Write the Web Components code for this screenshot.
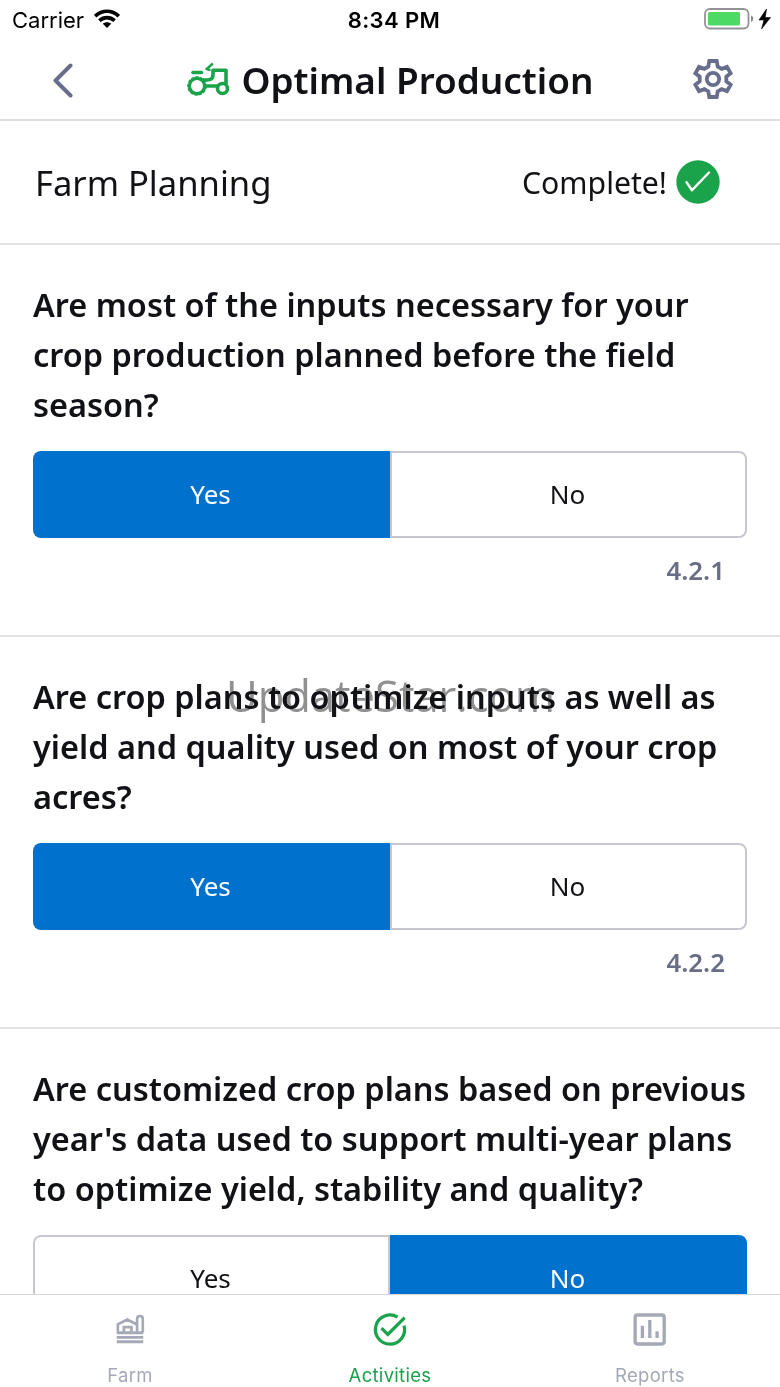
<!DOCTYPE html>
<html lang="en">
<head>
<meta charset="utf-8">
<title>Optimal Production</title>
<style>
  body {
    margin: 0;
    background: #fff;
    color: #111216;
    font-family: "Noto Sans", "Open Sans", sans-serif;
  }
</style>
</head>
<body>
<farm-app></farm-app>

<script>
const define = (tagName, markup, setup) => {
  const template = document.createElement('template');
  template.innerHTML = markup;

  window.customElements.define(tagName, class extends HTMLElement {
    constructor() {
      super();
      this.attachShadow({ mode: 'open' });
      this.shadowRoot.appendChild(template.content.cloneNode(true));
    }

    connectedCallback() {
      if (setup) setup(this, this.shadowRoot);
    }
  });
};

define('status-bar', `
  <style>
    :host {
      display: grid;
      grid-template-columns: 1fr auto 1fr;
      align-items: center;
      height: 40px;
      box-sizing: border-box;
      padding: 0 8px 0 12px;
      color: #000;
      font: 22px/40px Inter, sans-serif;
    }
    .left, .right { display: flex; align-items: center; }
    .left { gap: 10px; }
    .right { justify-content: flex-end; }
    .time { font-weight: 600; letter-spacing: 0.4px; margin-left: 4px; }
    svg { display: block; margin-bottom: 2px; }
  </style>
  <div class="left">
    <span>Carrier</span>
    <svg width="26" height="20" viewBox="0 0 26 20" fill="none" stroke="#000" stroke-width="3.6">
      <path d="M1.200 7.200C8 .5 18 .5 24.800 7.200"/>
      <path d="M5.400 11.600c4.500-4 10.700-4 15.200 0"/>
      <path d="M13 19l-4.200-4.200c2.500-2 5.900-2 8.400 0z" fill="#000" stroke="none"/>
    </svg>
  </div>
  <span class="time">8:34 PM</span>
  <div class="right">
    <svg width="68" height="24" viewBox="0 0 68 24">
      <rect x="1" y="2" width="43.500" height="19.500" rx="5" fill="none" stroke="#939397" stroke-width="1.800"/>
      <rect x="4" y="5" width="32" height="13.500" rx="1.500" fill="#4cd964"/>
      <path d="M47 8.500c3 1 3 5.500 0 6.500z" fill="#8a8a8f"/>
      <path d="M62.500 2L55 13h5l-2.500 9L66.500 10.500h-5.300z" fill="#000" stroke="#000" stroke-width=".6"/>
    </svg>
  </div>
`);

define('nav-header', `
  <style>
    :host {
      display: grid;
      grid-template-columns: 120px 1fr 120px;
      align-items: center;
      height: 81px;
      box-sizing: border-box;
      border-bottom: 2px solid #e1e1e3;
    }
    svg { display: block; }
    .back { margin-left: 51px; }
    .gear { margin-left: 32px; margin-bottom: 2px; }
    .title {
      display: flex;
      justify-content: center;
      align-items: center;
      gap: 11px;
      font-size: 36.900px;
      font-weight: 600;
      line-height: 50px;
      white-space: nowrap;
    }
  </style>
  <svg class="back" width="24" height="36" viewBox="0 0 24 36" fill="none" stroke="#696d8c" stroke-width="4" stroke-linecap="round" stroke-linejoin="round">
    <path d="M19.500 3.500L4.500 18.500L19.500 33.500"/>
  </svg>
  <div class="title">
    <svg width="44" height="36" viewBox="0 0 44 36" fill="none" stroke="#1aa34a" stroke-width="3.600">
      <circle cx="11" cy="24" r="7.600" stroke-width="3.200"/>
      <circle cx="11" cy="24" r="9" stroke-width="1.600" stroke-dasharray="3.300 1.200"/>
      <circle cx="36.500" cy="26.500" r="5"/>
      <path d="M7 10.500h8.500" stroke-width="3.600" stroke-linecap="round"/>
      <path d="M20 24h12M17 18h4q6 0 6-5V8.300H40V22" stroke-linejoin="round"/>
      <path d="M19.500 6.500q3 1.500 5 1.500M20.800 7l6-5.500" stroke-width="2.400"/>
    </svg>
    <slot></slot>
  </div>
  <svg class="gear" width="42" height="42" viewBox="0 0 42 42" fill="none" stroke="#696d8c" stroke-width="3.800" stroke-linejoin="miter">
    <path d="M17.300 3h7.400l1 5.600 4 2.300 5.300-2 3.600 6.300-4.300 3.500v4.600l4.300 3.500-3.600 6.300-5.300-2-4 2.300-1 5.600h-7.400l-1-5.600-4-2.300-5.300 2-3.600-6.300 4.300-3.500v-4.600l-4.300-3.500L7 8.900l5.300 2 4-2.300z"/>
    <circle cx="21" cy="21" r="6.200"/>
  </svg>
`);

define('section-header', `
  <style>
    :host {
      display: flex;
      align-items: center;
      justify-content: space-between;
      height: 124px;
      box-sizing: border-box;
      padding: 0 60px 0 35px;
      border-bottom: 2px solid #e1e1e3;
      font-size: 34.600px;
    }
    .state { display: flex; align-items: center; gap: 9px; font-size: 30.200px; }
    svg { display: block; margin-bottom: 1px; }
  </style>
  <slot></slot>
  <div class="state">
    <slot name="state"></slot>
    <svg width="44" height="44" viewBox="0 0 44 44">
      <circle cx="22" cy="22" r="21.700" fill="#1aa34a"/>
      <path d="M10.500 22.200L16 30.200L33 12.500" fill="none" stroke="#fff" stroke-width="2.400" stroke-linecap="round" stroke-linejoin="round"/>
    </svg>
  </div>
`);

define('yes-no', `
  <style>
    :host {
      display: grid;
      grid-template-columns: 1fr 1fr;
      height: 87px;
      font-size: 26px;
    }
    .option {
      display: flex;
      align-items: center;
      justify-content: center;
      box-sizing: border-box;
      padding: 0 2px 2px 0;
      border: 2px solid #c6c8ce;
      background: #fff;
    }
    .yes { border-radius: 8px 0 0 8px; border-right: 0; padding-right: 4px; }
    .no { border-radius: 0 8px 8px 0; }
    :host([value="no"]) .yes { border-right: 2px solid #c6c8ce; padding-right: 2px; }
    :host([value="yes"]) .yes,
    :host([value="no"]) .no {
      background: #0072ce;
      border-color: #0072ce;
      color: #fff;
    }
  </style>
  <div class="option yes">Yes</div>
  <div class="option no">No</div>
`);

define('survey-question', `
  <style>
    :host {
      display: flex;
      flex-direction: column;
      height: 392px;
      box-sizing: border-box;
      padding: 35px 33px 0;
      border-bottom: 2px solid #e1e1e3;
    }
    .text {
      font-size: 32.480px;
      font-weight: 600;
      line-height: 50px;
      white-space: nowrap;
      margin-bottom: 21px;
    }
    .code {
      align-self: flex-end;
      margin: 14px 22px 0 0;
      color: #696d85;
      font-size: 25.800px;
      font-weight: 600;
      line-height: 36px;
    }
  </style>
  <div class="text"><slot></slot></div>
  <yes-no></yes-no>
  <div class="code"></div>
`, (host, root) => {
  root.querySelector('yes-no').setAttribute('value', host.getAttribute('answer'));
  root.querySelector('.code').textContent = host.getAttribute('code') || '';
});

define('tab-item', `
  <style>
    :host {
      flex: 1;
      display: flex;
      flex-direction: column;
      align-items: center;
      padding-top: 16px;
      color: #a5a9b6;
      font: 18.500px/24px Inter, sans-serif;
      letter-spacing: 0.3px;
    }
    :host([active]) { color: #1aa34a; }
    .label { margin-top: 16px; }
  </style>
  <slot name="icon"></slot>
  <div class="label"><slot></slot></div>
`);

define('tab-bar', `
  <style>
    :host {
      display: flex;
      height: 93px;
      box-sizing: border-box;
      border-top: 1px solid #d6d7da;
      background: #fff;
    }
    svg { display: block; }
  </style>
  <tab-item>
    <svg slot="icon" width="38" height="38" viewBox="0 0 38 38" fill="none" stroke="currentColor" stroke-width="2.800">
      <path d="M5 23h28M5 27.800h28M5 32.500h28" stroke-width="3"/>
      <path d="M6.200 22v-8l10-5 9.500 5M12.500 22v-5h8v5M26.500 22V8.500q0-3.200 3-3.200t3 3.200v14"/>
    </svg>
    Farm
  </tab-item>
  <tab-item active>
    <svg slot="icon" width="38" height="38" viewBox="0 0 38 38" fill="none" stroke="currentColor" stroke-width="3.400">
      <path d="M27 6.500A15.400 15.400 0 1 0 33.800 15.500"/>
      <path d="M10 18L16.700 24.800L34.500 7"/>
    </svg>
    Activities
  </tab-item>
  <tab-item>
    <svg slot="icon" width="38" height="38" viewBox="0 0 38 38" fill="none" stroke="currentColor" stroke-width="3.500">
      <rect x="3.300" y="4.200" width="30.700" height="30.600" rx="2.500"/>
      <path d="M11 15.500V28.500M18.800 9.500V28.500M26.500 21.500V28.500"/>
    </svg>
    Reports
  </tab-item>
`);

define('farm-app', `
  <style>
    :host {
      position: relative;
      display: flex;
      flex-direction: column;
      width: 780px;
      height: 1387px;
      overflow: hidden;
    }
    .questions { flex: 1; min-height: 0; overflow: hidden; }
    /* stamp laid over the scrolling content */
    .stamp {
      position: absolute;
      left: 226px;
      top: 666px;
      color: #909090;
      font: 400 43.500px/60px "Open Sans", "Noto Sans", sans-serif;
      mix-blend-mode: darken;
      white-space: nowrap;
    }
  </style>
  <status-bar></status-bar>
  <nav-header>Optimal Production</nav-header>
  <section-header>Farm Planning<span slot="state">Complete!</span></section-header>
  <div class="questions">
    <survey-question answer="yes" code="4.2.1">Are most of the inputs necessary for your<br>crop production planned before the field<br>season?</survey-question>
    <survey-question answer="yes" code="4.2.2">Are crop plans to optimize inputs as well as<br>yield and quality used on most of your crop<br>acres?</survey-question>
    <survey-question answer="no">Are customized crop plans based on previous<br>year's data used to support multi-year plans<br>to optimize yield, stability and quality?</survey-question>
  </div>
  <tab-bar></tab-bar>
  <div class="stamp">UpdateStar.com</div>
`);
</script>
</body>
</html>
